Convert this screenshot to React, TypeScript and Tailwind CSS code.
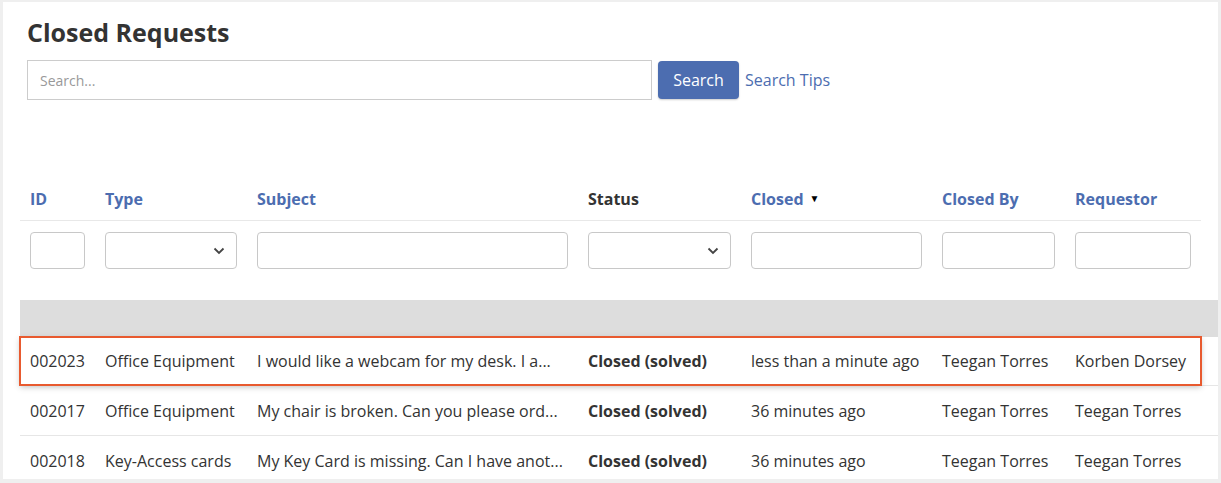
import React from "react";

const cols = "grid grid-cols-[75px_152px_331px_163px_191px_133px_136px]";

type Row = {
  id: string;
  type: string;
  subject: string;
  status: string;
  closed: string;
  closedBy: string;
  requestor: string;
};

const rows: Row[] = [
  {
    id: "002023",
    type: "Office Equipment",
    subject: "I would like a webcam for my desk. I a...",
    status: "Closed (solved)",
    closed: "less than a minute ago",
    closedBy: "Teegan Torres",
    requestor: "Korben Dorsey",
  },
  {
    id: "002017",
    type: "Office Equipment",
    subject: "My chair is broken. Can you please ord...",
    status: "Closed (solved)",
    closed: "36 minutes ago",
    closedBy: "Teegan Torres",
    requestor: "Teegan Torres",
  },
  {
    id: "002018",
    type: "Key-Access cards",
    subject: "My Key Card is missing. Can I have anot...",
    status: "Closed (solved)",
    closed: "36 minutes ago",
    closedBy: "Teegan Torres",
    requestor: "Teegan Torres",
  },
];

const Chevron = () => (
  <svg
    className="pointer-events-none absolute right-[11px] top-1/2 -translate-y-1/2"
    width="12"
    height="8"
    viewBox="0 0 12 8"
    fill="none"
  >
    <path d="M1.5 1.5 6 6l4.5-4.5" stroke="#444" strokeWidth="1.8" />
  </svg>
);

const TextFilter = () => (
  <input className="box-border h-[37px] w-full rounded-[4px] border border-[#c8c8c8] bg-white outline-none" />
);

const SelectFilter = () => (
  <div className="relative h-[37px] w-full rounded-[4px] border border-[#c8c8c8] bg-white">
    <Chevron />
  </div>
);

const TableRow = ({ row, active }: { row: Row; active?: boolean }) => (
  <div className={`${active ? "h-[49px]" : "h-[50px]"} box-border border-b border-[#e6e6e6]`}>
    <div
      className={`${cols} h-full w-[1181px] items-center text-[16px] text-[#333] ${
        active ? "relative z-10 shadow-[0_2px_6px_rgba(0,0,0,0.25)] outline-2 outline-offset-[-1px] outline-[#e85a2f]" : ""
      }`}
    >
      <div className="truncate pl-[10px]">{row.id}</div>
      <div className="truncate pl-[10px]">{row.type}</div>
      <div className="truncate pl-[10px]">{row.subject}</div>
      <div className="truncate pl-[10px] font-bold">{row.status}</div>
      <div className="whitespace-nowrap pl-[10px]">{row.closed}</div>
      <div className="truncate pl-[10px]">{row.closedBy}</div>
      <div className="truncate pl-[10px]">{row.requestor}</div>
    </div>
  </div>
);

export default function App() {
  return (
    <div
      className="h-[483px] w-[1221px] overflow-hidden bg-[#efefef] pl-[3px] pr-[3px] pt-[2px]"
      style={{ fontFamily: '"Open Sans", "Noto Sans", sans-serif' }}
    >
      <div className="h-[477px] overflow-hidden bg-white">
        <div className="pl-[24px] pt-[14px]">
          <h1 className="text-[25px] font-bold leading-[32px] text-[#333]">Closed Requests</h1>
          <div className="mt-[12px] flex items-center">
            <input
              placeholder="Search..."
              className="box-border h-[40px] w-[625px] border border-[#ccc] px-[12px] text-[14px] text-[#333] outline-none placeholder:text-[#999]"
            />
            <button className="ml-[6px] h-[38px] w-[81px] rounded-[4px] bg-[#4c6db0] text-[16px] text-white shadow-[0_1px_2px_rgba(0,0,0,0.2)]">
              Search
            </button>
            <a className="ml-[6px] text-[16px] text-[#4c6db0]">Search Tips</a>
          </div>
        </div>

        <div className="ml-[17px] mt-[77px]">
          <div className={`${cols} box-border h-[44px] w-[1181px] items-center border-b border-[#e8e8e8] text-[16px] font-bold text-[#4c6db0]`}>
            <div className="pl-[10px]">ID</div>
            <div className="pl-[10px]">Type</div>
            <div className="pl-[10px]">Subject</div>
            <div className="pl-[10px] text-[#333]">Status</div>
            <div className="flex items-center pl-[10px]">
              Closed
              <span className="ml-[6px] text-[10px] text-black">▼</span>
            </div>
            <div className="pl-[10px]">Closed By</div>
            <div className="pl-[10px]">Requestor</div>
          </div>
          <div className={`${cols} h-[79px] w-[1181px] items-start pt-[11px]`}>
            <div className="px-[10px]"><TextFilter /></div>
            <div className="px-[10px]"><SelectFilter /></div>
            <div className="px-[10px]"><TextFilter /></div>
            <div className="px-[10px]"><SelectFilter /></div>
            <div className="px-[10px]"><TextFilter /></div>
            <div className="px-[10px]"><TextFilter /></div>
            <div className="px-[10px]"><TextFilter /></div>
          </div>
          <div className="h-[37px] bg-[#dddddd]" />
          {rows.map((r, i) => (
            <TableRow key={r.id} row={r} active={i === 0} />
          ))}
        </div>
      </div>
    </div>
  );
}
